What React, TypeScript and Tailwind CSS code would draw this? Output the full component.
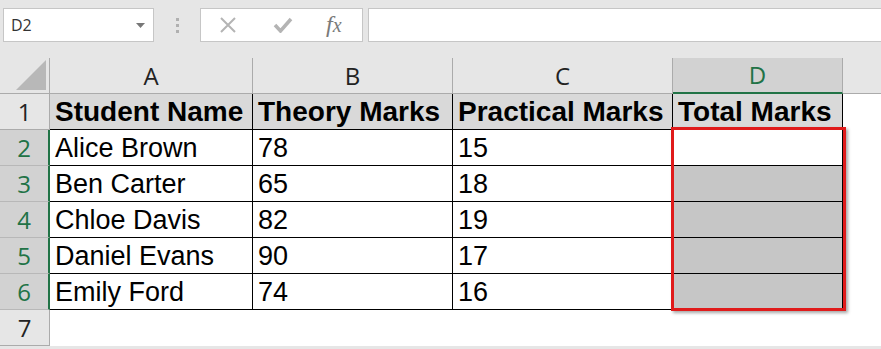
import React from 'react'

const rows = [
  ['Alice Brown', '78', '15'],
  ['Ben Carter', '65', '18'],
  ['Chloe Davis', '82', '19'],
  ['Daniel Evans', '90', '17'],
  ['Emily Ford', '74', '16'],
]

const cell = "h-9 border-r border-b border-black pl-[5px] flex items-end pb-[3px] leading-none text-black overflow-hidden whitespace-nowrap"
const ui = { fontFamily: '"Open Sans", sans-serif' }

export default function App() {
  return (
    <div className="relative w-[881px] h-[349px] overflow-hidden bg-[#e6e6e6]" style={{ fontFamily: '"Liberation Sans", Arial, sans-serif' }}>
      {/* formula bar */}
      <div className="flex items-center h-[58px] pb-[16px] pt-[8px] pl-[3px]">
        <div className="flex items-center justify-between w-[151px] h-[34px] bg-white border border-[#c6c6c6] pl-[7px] pr-[8px]">
          <span className="text-[16px] text-[#333]" style={ui}>D2</span>
          <svg width="9" height="5" viewBox="0 0 9 5"><path d="M0 0h9L4.5 5z" fill="#777" /></svg>
        </div>
        <div className="w-[46px] flex flex-col items-center gap-[3px]">
          <span className="w-[3px] h-[3px] bg-[#b0b0b0]" />
          <span className="w-[3px] h-[3px] bg-[#b0b0b0]" />
          <span className="w-[3px] h-[3px] bg-[#b0b0b0]" />
        </div>
        <div className="flex items-center w-[163px] h-[34px] bg-white border border-[#c6c6c6]">
          <svg className="ml-[18px]" width="18" height="18" viewBox="0 0 18 18">
            <path d="M2 2L16 16M16 2L2 16" stroke="#b4b4b4" strokeWidth="2" />
          </svg>
          <svg className="ml-[36px]" width="20" height="16" viewBox="0 0 20 16">
            <path d="M2 8l5.5 6L18 2" stroke="#b4b4b4" strokeWidth="3.5" fill="none" />
          </svg>
          <span className="ml-[33px] text-[24px] italic text-[#7a7a7a] leading-none -mt-[2px]" style={{ fontFamily: '"Liberation Serif", serif' }}>
            <span>f</span><span className="text-[20px]">x</span>
          </span>
        </div>
        <div className="ml-[5px] flex-1 h-[34px] bg-white border border-[#c6c6c6] border-r-0" />
      </div>

      {/* sheet */}
      <div className="grid grid-cols-[50px_203px_200px_220px_170px_1fr] auto-rows-[36px]">
        {/* column headers */}
        <div className="relative border-r border-b border-[#ababab]">
          <svg className="absolute right-[3px] bottom-[3px]" width="30" height="30" viewBox="0 0 30 30">
            <path d="M30 0V30H0z" fill="#b8b8b8" />
          </svg>
        </div>
        {['A', 'B', 'C'].map((l) => (
          <div key={l} className="flex items-center justify-center border-r border-b border-[#ababab] text-[24px] text-[#222]" style={ui}>
            {l}
          </div>
        ))}
        <div className="flex items-center justify-center bg-[#d2d2d2] border-r border-[#ababab] border-b-2 border-b-[#217346] text-[24px] text-[#217346]" style={ui}>
          D
        </div>
        <div className="border-b border-[#ababab]" />

        {/* row 1 */}
        <div className="flex items-center justify-center border-r border-b border-[#ababab] text-[24px] text-[#222]" style={ui}>1</div>
        {['Student Name', 'Theory Marks', 'Practical Marks', 'Total Marks'].map((h) => (
          <div key={h} className={cell + ' bg-[#d9d9d9] font-bold text-[28px]'}>{h}</div>
        ))}
        <div className="bg-white" />

        {/* data rows */}
        {rows.map((r, i) => (
          <React.Fragment key={r[0]}>
            <div className="flex items-center justify-center bg-[#d2d2d2] border-r-2 border-r-[#217346] border-b border-[#b8b8b8] text-[24px] text-[#217346]" style={ui}>
              {i + 2}
            </div>
            {r.map((v, j) => (
              <div key={j} className={cell + ' bg-white text-[27px]'}>{v}</div>
            ))}
            <div className={cell + (i === 0 ? ' bg-white' : ' bg-[#c6c6c6]')} />
            <div className="bg-white" />
          </React.Fragment>
        ))}

        {/* row 7 */}
        <div className="flex items-center justify-center border-r border-b border-[#ababab] text-[24px] text-[#222]" style={ui}>7</div>
        <div className="col-span-5 bg-white" />
      </div>

      {/* highlight annotation */}
      <div className="absolute left-[671px] top-[127px] w-[175px] h-[184px] border-[3px] border-[#e01b1b] shadow-[2px_2px_3px_rgba(0,0,0,0.35)]" />
    </div>
  )
}
